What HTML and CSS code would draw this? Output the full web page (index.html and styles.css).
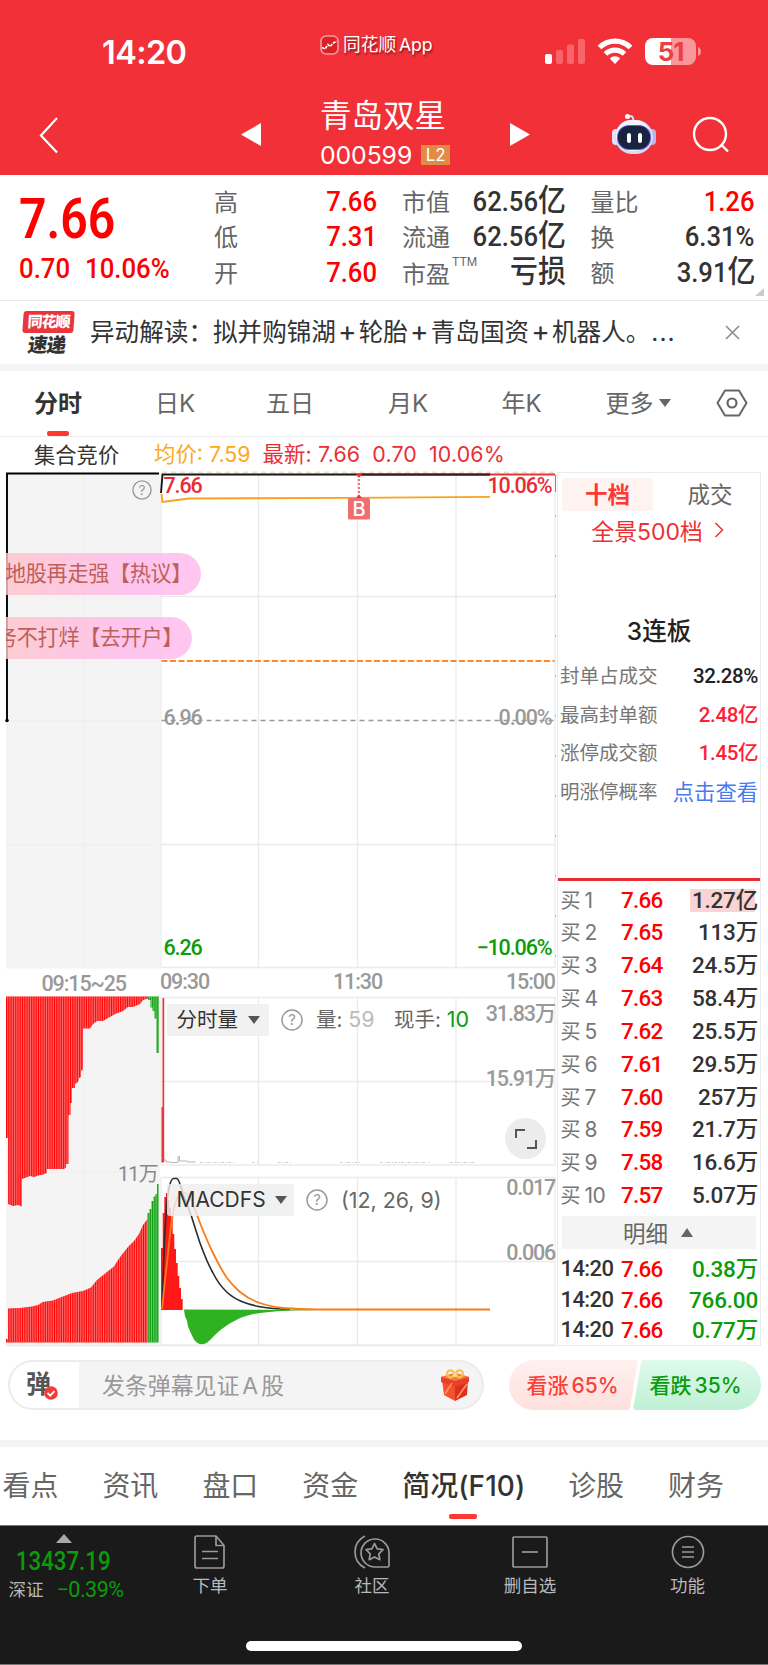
FILE: index.html
```html
<!DOCTYPE html>
<html lang="zh-CN">
<head>
<meta charset="utf-8">
<title>青岛双星 000599</title>
<link rel="stylesheet" href="styles.css">
</head>
<body>
<header class="top">
  <div class="status">
    <span class="clock">14:20</span>
    <span class="brand">
      <svg width="19" height="20" viewBox="0 0 19 20"><rect x="1" y="1" width="17" height="18" rx="5" fill="#dc2229" stroke="#f79a9d" stroke-width="1.6"/><path d="M2 12.500l3 1.500 3-4.500 2 2 4-4 3-1" fill="none" stroke="#fff" stroke-width="1.600" stroke-dasharray="3 1"/></svg>
      <span>同花顺<i>App</i></span>
    </span>
    <svg class="radio" width="158" height="30" viewBox="0 0 158 30">
      <rect x="2" y="17" width="7" height="10" rx="2" fill="#fff"/>
      <g fill="#f8646a"><rect x="13" y="13" width="7" height="14" rx="2"/><rect x="24" y="7.500" width="7" height="19.500" rx="2"/><rect x="35" y="2" width="7" height="25" rx="2"/></g>
      <g fill="none" stroke="#fff" stroke-width="5.200"><path d="M56.500 10.500a22 22 0 0 1 31 0"/><path d="M62.500 17a13.500 13.500 0 0 1 19 0"/></g>
      <path d="M66.800 21.500a7.300 7.300 0 0 1 10.400 0l-5.200 5.500z" fill="#fff"/>
      <path d="M110 1h19v27h-19a8 8 0 0 1-8-8V9a8 8 0 0 1 8-8z" fill="#fff"/>
      <path d="M128 1h17a8 8 0 0 1 8 8v11a8 8 0 0 1-8 8h-17z" fill="#f9979b"/>
      <path d="M155 10q3 1.500 3 4.500t-3 4.500z" fill="#f9979b"/>
      <text x="127.500" y="23.500" text-anchor="middle" class="batt">51</text>
    </svg>
  </div>
  <div class="nav">
    <svg class="back" width="20" height="36" viewBox="0 0 20 36"><path d="M18 1L2 18.500 18 35.500" fill="none" stroke="#fff" stroke-width="2.200"/></svg>
    <svg class="prev" width="20" height="23" viewBox="0 0 20 23"><path d="M20 0v23L0 11.500z" fill="#fff"/></svg>
    <div class="stock">
      <div class="name">青岛双星</div>
      <div class="code"><span>000599</span><b>L2</b></div>
    </div>
    <svg class="next" width="20" height="23" viewBox="0 0 20 23"><path d="M0 0v23l20-11.500z" fill="#fff"/></svg>
    <svg class="bot" width="44" height="42" viewBox="0 0 44 42">
      <path d="M15.500 3.500c4-1.500 6 0 6 5" fill="none" stroke="#dcdcf5" stroke-width="2"/><circle cx="15.500" cy="3.500" r="2.500" fill="#fff"/>
      <rect x="0" y="16" width="8" height="16" rx="4" fill="#e4e1f8"/><rect x="36" y="16" width="8" height="16" rx="4" fill="#b9b5ea"/>
      <rect x="3" y="7" width="38" height="34" rx="17" fill="#d5dcf6"/><rect x="4" y="7" width="34" height="31" rx="15" fill="#f2f4ff"/>
      <rect x="5" y="12" width="34" height="25" rx="12" fill="#675bd6"/><rect x="6" y="13" width="32" height="23" rx="11" fill="#18233f"/>
      <rect x="15" y="20" width="4" height="10" rx="2" fill="#fff"/><rect x="26" y="20" width="4" height="10" rx="2" fill="#fff"/>
    </svg>
    <svg class="find" width="38" height="38" viewBox="0 0 38 38"><g fill="none" stroke="#fff" stroke-width="2.400"><circle cx="18" cy="18" r="16"/><path d="M29 28.500l7 7"/></g></svg>
  </div>
</header>

<section class="quote">
  <div class="price">
    <div class="last"><span>7.66</span></div>
    <div class="chg"><span>0.70</span><span>10.06%</span></div>
  </div>
  <dl class="facts">
    <dt>高</dt><dd class="red">7.66</dd><dt>市值</dt><dd>62.56<em>亿</em></dd><dt>量比</dt><dd class="red">1.26</dd>
    <dt>低</dt><dd class="red">7.31</dd><dt>流通</dt><dd>62.56<em>亿</em></dd><dt>换</dt><dd>6.31%</dd>
    <dt>开</dt><dd class="red">7.60</dd><dt>市盈<sup>TTM</sup></dt><dd><em>亏损</em></dd><dt>额</dt><dd>3.91<em>亿</em></dd>
  </dl>
  <i class="corner"></i>
</section>

<section class="news">
  <div class="tag"><b>同花顺</b><strong>速递</strong></div>
  <p>异动解读：拟并购锦湖<u>+</u>轮胎<u>+</u>青岛国资<u>+</u>机器人。<s>...</s></p>
  <svg width="15" height="15" viewBox="0 0 15 15"><path d="M1 1l13 13M14 1L1 14" stroke="#909090" stroke-width="1.700"/></svg>
</section>

<nav class="periods">
  <span class="on">分时</span><span>日K</span><span>五日</span><span>月K</span><span>年K</span><span class="more">更多<i></i></span>
  <svg width="32" height="28" viewBox="0 0 32 28"><path d="M9 1.500h14L30.500 14 23 26.500H9L1.500 14z" fill="none" stroke="#666" stroke-width="2" stroke-linejoin="round"/><circle cx="16" cy="14" r="4.500" fill="none" stroke="#666" stroke-width="2.200"/></svg>
</nav>

<div class="legend"><span class="auction">集合竞价</span><span class="avg">均价: 7.59</span><span>最新: 7.66</span><span>0.70</span><span>10.06%</span></div>

<main class="board">
  <div class="charts">
    <svg class="plot" width="557" height="876" viewBox="0 471 557 876">
      <defs>
        <pattern id="slit" width="1.780" height="10" x="6" patternUnits="userSpaceOnUse"><rect x="1.300" width=".480" height="10" fill="#fff" opacity=".8"/></pattern>
      </defs>
      <path d="M6 473h154v495.500H6zM6 996.500h154V1345H6z" fill="#f4f4f4"/>
      <g stroke="#e8e8e8" stroke-dasharray="2 2"><path d="M84 474v494M6 597h153M6 845h153M84 997v348M6 1172h153"/></g>
      <path d="M6 721h153" stroke="#ececec"/>
      <g fill="none" stroke="#ebebeb" stroke-width="1.300">
        <path d="M161 473v494.500M258.500 473v494.500M357.500 473v494.500M456 473v494.500M555 473v494.500M161 596.500h394M161 844.500h394M161 967.500h394"/>
        <path d="M161 997.500h394v167.500H161zM258.500 997v168M357.500 997v168M456 997v168M161 1081.500h394"/>
        <path d="M161 1177.500h394V1345H161zM258.500 1177v168M357.500 1177v168M456 1177v168M161 1261.500h394M6 1345.500h549"/>
      </g>
      <path d="M162 472.500h393" stroke="#f1dfca" stroke-width="2" stroke-dasharray="5 4"/>
      <path d="M359 474.500h196" stroke="#e3353e" stroke-width="2"/>
      <path d="M555.500 475v493" stroke="#f3a5a8" stroke-dasharray="2 38"/>
      <path d="M555.500 475v17" stroke="#e86065" stroke-width="1"/>
      <path d="M161 493l1.500-18.500H490" fill="none" stroke="#151515" stroke-width="1.900"/>
      <path d="M360 475h130" stroke="#9d1820" stroke-width="1" opacity=".6"/>
      <path d="M7 720V473.500h152" fill="none" stroke="#000" stroke-width="1.900"/><circle cx="7" cy="720.500" r="1.800"/>
      <path d="M161.500 494l1 8 15-2 11-1.500 160-.6 141.500-1" fill="none" stroke="#fba21d" stroke-width="1.900"/>
      <path d="M161.500 661h393" stroke="#ff872b" stroke-width="2" stroke-dasharray="6 2.500"/>
      <path d="M161.500 720.500h393" stroke="#999" stroke-width="1.400" stroke-dasharray="5 4"/>
      <path d="M359 475v23" stroke="#eb343b" stroke-width="1.400" stroke-dasharray="2 2"/>
      <path d="M355.500 473.500h7L359 478zM355.500 498.500h7L359 494.500z" fill="#eb343b"/>
      <rect x="348" y="498" width="22" height="21.500" rx="1.500" fill="#f16e70"/>
      <text x="359" y="515.500" class="flag" text-anchor="middle">B</text>

      <g class="scale">
        <text x="163.500" y="493" class="up">7.66</text>
        <text x="551.500" y="493" class="up end">10.06%</text>
        <text x="163.500" y="724.500">6.96</text>
        <text x="551.500" y="724.500" class="end">0.00%</text>
        <text x="163.500" y="955" class="down">6.26</text>
        <text x="551.500" y="955" class="down end">−10.06%</text>
        <text x="41.500" y="990.500">09:15~25</text>
        <text x="160" y="989">09:30</text>
        <text x="357.500" y="989" class="mid">11:30</text>
        <text x="555" y="989" class="end">15:00</text>
      </g>

      <path d="M6 996.500H148V998.500L143 1000 140 1004 133 1007 128 1007 123 1011 115 1014 108 1018 103 1021 97 1021 93 1024 90 1028.500H83V1069L81 1071V1077L79 1078 78 1082 75 1084V1088H72V1103H70.500V1115H68.500V1164H66V1167.500L64 1169H47V1173L43 1174.500 38 1175.500 34 1177 30 1176 22 1179V1206.500L18 1205 13 1206 8 1204V1138H6z" fill="#f00"/>
      <path d="M6 996.500H148V998.500L143 1000 140 1004 133 1007 128 1007 123 1011 115 1014 108 1018 103 1021 97 1021 93 1024 90 1028.500H83V1069L81 1071V1077L79 1078 78 1082 75 1084V1088H72V1103H70.500V1115H68.500V1164H66V1167.500L64 1169H47V1173L43 1174.500 38 1175.500 34 1177 30 1176 22 1179V1206.500L18 1205 13 1206 8 1204V1138H6z" fill="url(#slit)"/>
      <path d="M148 996.500h11V1053h-2.500v-34.500h-2V1011h-2v-3.500h-2V1000H148z" fill="#0a9c0a"/>
      <path d="M148 996.500h11V1053h-2.500v-34.500h-2V1011h-2v-3.500h-2V1000H148z" fill="url(#slit)"/>
      <path d="M6 1342.500V1339H8V1308.500L20 1308 32 1306.500 38 1305 43 1302 53 1300.500 63 1296.500 72 1293 83 1291 91 1287.500 97 1280 107 1272 114 1266.500 118 1260 122 1254.500 128 1247 134 1241 139 1234 143 1225 147.500 1219V1342.500z" fill="#f00"/>
      <path d="M6 1342.500V1339H8V1308.500L20 1308 32 1306.500 38 1305 43 1302 53 1300.500 63 1296.500 72 1293 83 1291 91 1287.500 97 1280 107 1272 114 1266.500 118 1260 122 1254.500 128 1247 134 1241 139 1234 143 1225 147.500 1219V1342.500z" fill="url(#slit)"/>
      <path d="M147.500 1342.500V1213h2v-4h2v-8h2v-4.500h2V1194h1.500v-10h1.700v158.500z" fill="#0a9c0a"/>
      <path d="M147.500 1342.500V1213h2v-4h2v-8h2v-4.500h2V1194h1.500v-10h1.700v158.500z" fill="url(#slit)"/>
      <text x="158" y="1180.500" class="wan">11万</text>

      <path d="M161.500 1162.500V1107h1V998h1.700v164.500z" fill="#e9363b"/>
      <path d="M164 1160h2v2h5v.5h7v-6h1.500v4.500h8v1h8" fill="none" stroke="#b5b5b5"/>
      <path d="M200 1162.500h34M252 1162.500h6M278 1162.500h14M340 1162.500h20M380 1162.500h50M450 1162.500h24" fill="none" stroke="#d0d0d0" stroke-width="1" stroke-dasharray="3 2 1 1"/>
      <g class="scale volumes">
        <text x="555" y="1020.500" class="end">31.83万</text>
        <text x="555" y="1085.500" class="end">15.91万</text>
        <text x="555" y="1195" class="end">0.017</text>
        <text x="555" y="1260" class="end">0.006</text>
      </g>

      <path d="M161 1310V1248h1.700v-35h1.600v-16h1.700v-4h1.700v7h1.600v8h1.700v12h1.700v14h1.600v15h1.700v14h1.700v13h1.600v12h1.700v11h1.700v11z" fill="#ff1818"/>
      <path d="M184 1309.500l1 7 2 4 1 6 3 7 3 6c4 6 10 6 15 1.500L217 1333c13-11 26-18 43-20 20-2.500 37-2.500 57-3z" fill="#2fb222"/>
      <path d="M162 1308C163 1285 163.600 1262 164.500 1240 165.400 1222 166.500 1200 169 1188 170.500 1181 172 1178.500 173.500 1178.500H177C179 1179 181 1187 183 1194 186 1202 189 1209 191.700 1217 194.500 1226 197 1234 200 1243 204 1254 208.500 1265 213 1273 217 1281 222 1287.500 226.700 1292 231.500 1296.500 237 1299.700 243 1302 248 1304 254 1305.700 260 1306.700 269 1308.200 279 1309 290 1309.300" fill="none" stroke="#2b2b2b" stroke-width="1.600"/>
      <path d="M162 1309C164 1290 165 1278 167 1263 169 1244 170.500 1226 173 1213 174.500 1205 176 1200 178 1197 179.500 1194 181 1192.700 183 1192.700 186 1192.700 188 1194.500 190 1198 194 1206 197 1215 200 1223 204 1233 208.500 1244 213 1253 217.500 1262 222 1271 227 1278 231 1283.500 235.500 1288 240 1292 245 1296 251 1299.700 257 1302 265 1305 274 1307 283 1308 294 1309 305 1309.500 317 1309.500H490" fill="none" stroke="#fa7c18" stroke-width="1.800"/>
    </svg>

    <svg class="tip tip-auction" width="20" height="20" viewBox="0 0 22 22"><circle cx="11" cy="11" r="10"/><text x="11" y="16" text-anchor="middle">?</text></svg>
    <div class="danmu first"><span>地股再走强【热议】</span></div>
    <div class="danmu second"><span>务不打烊【去开户】</span></div>

    <div class="tools volume">
      <button>分时量<i></i></button>
      <svg class="tip" width="22" height="22" viewBox="0 0 22 22"><circle cx="11" cy="11" r="10"/><text x="11" y="16" text-anchor="middle">?</text></svg>
      <span class="qty">量: <b>59</b></span><span>现手: <em>10</em></span>
    </div>
    <div class="expand"><svg width="24" height="22" viewBox="0 0 24 22"><path d="M2 10V2h9M22 12v8h-9" fill="none" stroke="#555" stroke-width="2"/></svg></div>
    <div class="tools macd">
      <button>MACDFS<i></i></button>
      <svg class="tip" width="22" height="22" viewBox="0 0 22 22"><circle cx="11" cy="11" r="10"/><text x="11" y="16" text-anchor="middle">?</text></svg>
      <span class="args">(12, 26, 9)</span>
    </div>
  </div>

  <aside class="book">
    <div class="switch"><b>十档</b><span>成交</span></div>
    <div class="full">全景500档<svg width="10" height="16" viewBox="0 0 10 16"><path d="M1.500 1l7 7-7 7" fill="none" stroke="#ee3036" stroke-width="1.500"/></svg></div>
    <h2>3连板</h2>
    <ul class="stats">
      <li><span>封单占成交</span><b>32.28%</b></li>
      <li><span>最高封单额</span><b class="red">2.48亿</b></li>
      <li><span>涨停成交额</span><b class="red">1.45亿</b></li>
      <li><span>明涨停概率</span><a>点击查看</a></li>
    </ul>
    <ul class="bids">
      <li><span>买<i>1</i></span><b>7.66</b><em class="hot">1.27亿</em></li>
      <li><span>买<i>2</i></span><b>7.65</b><em>113万</em></li>
      <li><span>买<i>3</i></span><b>7.64</b><em>24.5万</em></li>
      <li><span>买<i>4</i></span><b>7.63</b><em>58.4万</em></li>
      <li><span>买<i>5</i></span><b>7.62</b><em>25.5万</em></li>
      <li><span>买<i>6</i></span><b>7.61</b><em>29.5万</em></li>
      <li><span>买<i>7</i></span><b>7.60</b><em>257万</em></li>
      <li><span>买<i>8</i></span><b>7.59</b><em>21.7万</em></li>
      <li><span>买<i>9</i></span><b>7.58</b><em>16.6万</em></li>
      <li><span>买<i>10</i></span><b>7.57</b><em>5.07万</em></li>
    </ul>
    <div class="detail">明细<i></i></div>
    <ul class="ticks">
      <li><span>14:20</span><b>7.66</b><em>0.38万</em></li>
      <li><span>14:20</span><b>7.66</b><em>766.00</em></li>
      <li><span>14:20</span><b>7.66</b><em>0.77万</em></li>
    </ul>
  </aside>
</main>

<section class="talk">
  <div class="input">
    <div class="dan">弹<svg width="14" height="14" viewBox="0 0 14 14"><circle cx="7" cy="7" r="6.800" fill="#f63a35"/><path d="M3.500 6.800l2.700 2.900 4.300-4.500" fill="none" stroke="#fff" stroke-width="1.800"/></svg></div>
    <span>发条弹幕见证<i>A</i>股</span>
    <svg class="gift" width="30" height="32" viewBox="0 0 30 32">
      <path d="M2 11l13 5v16L4 26z" fill="#f4522f"/><path d="M28 11l-13 5v16l12-6z" fill="#dc301d"/><path d="M1 8l14-4 14 4v5l-14 5-14-5z" fill="#e8402a"/><path d="M1 8l14-4 14 4-14 4z" fill="#f77b3d"/>
      <path d="M5 25l7-11M17 29l10-14" stroke="#ff9a55" stroke-width="1.500"/>
      <g fill="none" stroke="#f6c24e" stroke-width="2.200"><circle cx="10.500" cy="4.800" r="3.500"/><circle cx="19.500" cy="4.800" r="3.500"/></g><circle cx="15" cy="6" r="2" fill="#ffe289"/>
    </svg>
  </div>
  <div class="vote">
    <svg width="252" height="50" viewBox="0 0 252 50">
      <defs><linearGradient id="r" x2="0" y2="1"><stop stop-color="#fff0ef"/><stop offset="1" stop-color="#fee0dd"/></linearGradient><linearGradient id="g" x2="0" y2="1"><stop stop-color="#dffaec"/><stop offset="1" stop-color="#c0f0d5"/></linearGradient></defs>
      <path d="M25 0H126q3 0 2.500 3L121 47q-.5 3-3 3H25a25 25 0 0 1 0-50z" fill="url(#r)"/>
      <path d="M135 0H227a25 25 0 0 1 0 50H127q-3 0-2.500-3L132 3q.5-3 3-3z" fill="url(#g)"/>
    </svg>
    <span class="bull">看涨 65%</span><span class="bear">看跌 35%</span>
  </div>
</section>

<nav class="sections">
  <span>看点</span><span>资讯</span><span>盘口</span><span>资金</span><span class="on">简况(F10)</span><span>诊股</span><span>财务</span>
</nav>

<footer class="dock">
  <div class="index"><i></i><b>13437.19</b><p><span>深证</span><em>−0.39%</em></p></div>
  <div class="items">
    <div class="item order"><svg width="32" height="34" viewBox="0 0 32 34"><path d="M3 1h19l8 9.500V31q0 2-2 2H3q-2 0-2-2V3q0-2 2-2zM22 1v9.500h8M8 16.500h16M8 23.500h16"/></svg>下单</div>
    <div class="item club"><svg width="36" height="34" viewBox="0 0 36 34"><path d="M11 1Q1 6 1 17t10 16M35 31V17A14 14 0 1 0 21 32h13zM20.500 8.500l2.700 5.300 5.800.9-4.200 4.100 1 5.900-5.300-2.800-5.300 2.800 1-5.900-4.200-4.100 5.900-.9z"/></svg>社区</div>
    <div class="item drop"><svg width="36" height="34" viewBox="0 0 36 34"><rect x="1" y="2" width="34" height="30" rx="1"/><path d="M10 17h16"/></svg>删自选</div>
    <div class="item func"><svg width="34" height="34" viewBox="0 0 34 34"><circle cx="17" cy="17" r="15.500"/><path d="M11 12h12M11 17h12M11 22h12"/></svg>功能</div>
  </div>
  <div class="home"></div>
</footer>
</body>
</html>
```

FILE: styles.css
```css
* { box-sizing: border-box; margin: 0; padding: 0; }
body { width: 768px; height: 1665px; overflow: hidden; background: #fff; color: #333; font-family: Inter, "Noto Sans CJK SC", sans-serif; }
ul { list-style: none; }
i, em { font-style: normal; }
svg { display: block; flex: none; }
.red { color: #f00 !important; }

/* header */
.top { height: 174.500px; background: #f13137; color: #fff; }
.status { height: 78px; padding: 37px 0 0 102px; display: flex; align-items: flex-start; }
.clock { width: 218px; font-size: 32.500px; line-height: 32px; font-weight: 600; letter-spacing: -.6px; }
.brand { width: 223px; display: flex; gap: 4px; margin-top: -3px; align-items: center; font-size: 17.700px; line-height: 21px; text-shadow: 1px 2px 2px rgba(80, 0, 0, .6); }
.brand i { margin-left: 3px; letter-spacing: -.2px; }
.batt { font: 700 26px Inter; fill: #ef3d45; letter-spacing: -1.200px; }
.nav { height: 95px; display: flex; align-items: flex-start; padding-left: 39px; }
.back { margin-top: 38.500px; margin-right: 182px; }
.prev, .next { margin-top: 44.500px; }
.prev { margin-right: 59px; }
.stock { width: 190px; padding-top: 20px; }
.name { font-size: 31.500px; line-height: 36px; }
.code { display: flex; align-items: center; gap: 9px; margin-top: 10px; height: 22px; font-size: 24.800px; letter-spacing: -.1px; }
.code b { width: 29px; height: 20px; background: #e18c45; font-size: 17px; line-height: 20px; font-weight: 400; text-align: center; }
.bot { margin: 34.500px 0 0 82px; }
.find { margin: 38px 0 0 36px; }

/* quote */
.quote { position: relative; height: 126.500px; display: flex; padding-left: 20px; border-bottom: 1.500px solid #e9e9e9; }
.price { width: 194px; color: #f00; font-family: Roboto, sans-serif; font-weight: 500; }
.last { height: 66px; padding-top: 16px; font-size: 56px; line-height: 56px; font-weight: 600; }
.last span { display: inline-block; margin-left: -1px; transform: scaleX(.86); transform-origin: 0 50%; }
.chg { display: flex; margin-top: 12.500px; font-size: 28px; line-height: 32px; }
.chg span { width: 66px; margin-left: -1px; transform: scaleX(.92); transform-origin: 0 50%; white-space: nowrap; }
.chg span + span { margin-left: 0; }
.facts { display: grid; grid-template-columns: 40px 123px 62px 126px 62px 127.500px; grid-template-rows: repeat(3, 35.500px); padding-top: 9px; line-height: 35px; }
.facts dt { font-size: 24px; color: #666; white-space: nowrap; position: relative; top: 1px; }
.facts dt:nth-of-type(3n) { padding-left: .5px; }
.facts dt:nth-of-type(8) { top: 2.500px; }
.facts dd { font-family: Roboto, "Noto Sans CJK SC"; font-size: 28.500px; font-weight: 500; text-align: right; transform: scaleX(.9); transform-origin: 100% 50%; }
.facts dd em { font-weight: 500; font-size: 31px; margin-right: -1px; line-height: 30px; }
.facts dt:nth-of-type(3n + 2), .facts dt:nth-of-type(3n) { margin-left: 25px; margin-right: -25px; }
.facts sup { position: absolute; left: 50px; top: -10.500px; font-size: 11.500px; line-height: 30px; }
.corner { position: absolute; right: 4px; bottom: 4px; border: solid transparent; border-width: 0 0 8px 9px; border-bottom-color: #ccc; }

/* news */
.news { height: 70px; border-bottom: 7px solid #f4f4f4; display: flex; align-items: center; padding-left: 22px; }
.tag { width: 68px; height: 44px; }
.tag b { display: block; width: 51px; height: 22px; margin-left: 1px; border-radius: 3px; background: #ea353b; color: #fff; font-size: 15px; line-height: 21px; font-weight: 900; text-align: center; letter-spacing: -1px; transform: skewX(-4deg); }
.tag strong { display: block; margin-left: 6px; font-size: 19.500px; line-height: 24px; font-weight: 900; letter-spacing: -.7px; transform: skewX(-8deg); }
.news p { width: 634.500px; font-size: 24.600px; line-height: 34px; white-space: nowrap; margin-top: -1.500px; }
.news u { text-decoration: none; display: inline-block; width: 22.800px; font-size: 28px; line-height: 20px; text-align: center; }
.news s { text-decoration: none; letter-spacing: 1px; margin-left: 1px; }

/* tabs */
.periods { height: 65.500px; position: relative; display: flex; align-items: center; padding-left: 34px; border-bottom: 1.500px solid #ececec; font-size: 24px; color: #666; }
.periods span { width: 122px; height: 40px; line-height: 41px; }
.periods span:nth-child(1) { width: 121px; }
.periods span:nth-child(2) { width: 111px; }
.periods span:nth-child(4) { width: 113.500px; }
.periods span:nth-child(5) { width: 104px; }
.periods .on { color: #333; font-weight: 600; }
.periods .on::after { content: ""; position: absolute; left: 47px; bottom: 0; width: 22px; height: 5px; border-radius: 2px; background: #ff3931; }
.periods .more { width: 110.500px; display: flex; align-items: center; gap: 5px; }
.periods .more i { border: 6px solid transparent; border-top: 8px solid #666; border-bottom: 0; }
.legend { height: 34.500px; display: flex; padding: 0 0 0 34px; font-size: 21.400px; line-height: 35px; color: #ea2e34; white-space: pre; }
.legend span { margin-right: 12px; }
.legend .auction { width: 108px; color: #333; font-size: 21.300px; line-height: 37px; }
.legend .avg { color: #fbaa19; }
.legend span:nth-child(n + 3) { letter-spacing: .15px; }

/* charts */
.board { height: 876px; display: flex; }
.charts { position: relative; width: 557px; }
.plot { overflow: visible; }
.scale { font: 500 21.500px Roboto, "Noto Sans CJK SC"; fill: #999; letter-spacing: -1.100px; }
.volumes { letter-spacing: -1.200px; }
.scale .up { fill: #e92c34; }
.scale .down { fill: #0a9c0a; }
.end, .wan { text-anchor: end; }
.mid { text-anchor: middle; }
.wan { font: 20px Roboto, "Noto Sans CJK SC"; fill: #888; letter-spacing: -.8px; }
.flag { font: 500 20px Inter; fill: #fff; }
.tip circle { fill: none; stroke: #999; stroke-width: 1.500; }
.tip text { font: 15px Inter; fill: #999; }
.tip-auction { position: absolute; left: 132px; top: 9px; }
.danmu { position: absolute; left: 6px; height: 42px; overflow: hidden; border-radius: 0 21px 21px 0; background: linear-gradient(90deg, rgba(255, 195, 202, .82), rgba(255, 190, 237, .88) 65%); color: #be5f5a; font-size: 21.100px; line-height: 42px; letter-spacing: -.3px; }
.danmu span { display: block; margin-left: -1px; white-space: nowrap; }
.first { top: 82px; width: 195px; }
.second { top: 146px; width: 186px; }
.second span { margin-left: -10px; }
.tools { position: absolute; left: 167px; display: flex; align-items: center; height: 32px; font-size: 20.500px; line-height: 30px; color: #666; white-space: nowrap; }
.tools button { border: 0; height: 32px; border-radius: 3px; background: rgba(238, 238, 238, .82); color: #333; padding: 0 0 0 9.500px; font: inherit; display: flex; align-items: center; }
.tools button i { border: 6px solid transparent; border-top: 8px solid #555; border-bottom: 0; margin: 0 0 0 9.500px; }
.volume { top: 532.500px; }
.volume button { width: 102px; }
.macd { top: 713px; }
.macd button { width: 127px; font-size: 21px; }
.tools .tip { margin: 0 13px 0 12px; }
.tools b { font-weight: 400; color: #bbb; font-size: 21.500px; }
.qty { width: 78px; }
.args { font-size: 21.400px; }
.tools em { color: #0a9c0a; font-size: 21.500px; }
.expand { position: absolute; left: 505px; top: 647px; width: 41px; height: 41px; border-radius: 50%; background: #ececec; display: grid; place-items: center; }

/* order book */
.book { width: 204px; margin-top: 1px; height: 874px; border: 1.500px solid #ebebeb; padding: 5px 3px 0 4px; }
.switch { display: flex; height: 33px; font-size: 22.500px; line-height: 33px; text-align: center; color: #666; }
.switch b { width: 92px; background: #fff3f2; color: #fb3a33; border-radius: 3px; font-weight: 600; }
.switch span { width: 105px; padding-left: 10px; }
.full { display: flex; align-items: center; justify-content: center; gap: 11px; height: 37px; font-size: 23px; color: #ee3036; letter-spacing: -.1px; padding-right: 4px; }
.book h2 { margin-top: 64px; height: 38px; font-size: 24.500px; line-height: 38px; font-weight: 500; text-align: center; padding-right: 1px; color: #222; }
.stats { padding-top: 7px; height: 231px; border-bottom: 3.500px solid #e82d32; margin: 0 -3px 0 -4px; padding-left: 2px; padding-right: 2px; }
.stats li { height: 38.700px; line-height: 38.700px; display: flex; justify-content: space-between; font-size: 19.500px; color: #777; white-space: nowrap; }
.stats b { color: #222; font-family: Roboto, "Noto Sans CJK SC"; font-size: 20.500px; font-weight: 500; letter-spacing: -.4px; }
.stats .red { color: #ff1e35 !important; }
.stats a { color: #4a7af3; font-size: 21.300px; }
.bids { padding-top: 2.500px; }
.bids li, .ticks li { display: grid; grid-template-columns: 60.500px 45px 92px; height: 32.850px; line-height: 33px; font-size: 22px; white-space: nowrap; margin-left: -1.500px; }
.book li > em { text-align: right; font-family: Roboto, "Noto Sans CJK SC"; font-weight: 500; font-size: 22.500px; letter-spacing: -.2px; }
.bids li span { color: #777; font-size: 20px; }
.bids span i { margin-left: 4px; font-size: 21px; letter-spacing: -.5px; }
.bids b, .ticks b { color: #f00; font-family: Roboto; font-weight: 500; letter-spacing: -.8px; font-size: 22.500px; }
.bids .hot { background: linear-gradient(#fad3d4, #fad3d4) 24px 5px / 65px 23px no-repeat; }
.detail { height: 33px; margin-top: 4px; margin-right: 1px; background: #f4f4f4; color: #666; font-size: 22.500px; display: flex; align-items: center; justify-content: center; gap: 13px; padding-right: 2px; }
.detail i { border: 6px solid transparent; border-bottom: 9px solid #666; border-top: 0; }
.ticks { padding-top: 5.500px; }
.ticks li { height: 30.400px; line-height: 30px; }
.ticks li span { font-family: Roboto; font-weight: 500; letter-spacing: -.6px; }
.ticks em { color: #0a9c0a; }

/* comment bar */
.talk { height: 100px; padding: 13px 7.500px 0 8px; border-bottom: 7px solid #f4f4f4; display: flex; justify-content: space-between; }
.input { width: 476px; height: 50px; border: 2px solid #ececec; border-radius: 25px; overflow: hidden; background: #f4f4f4; display: flex; align-items: center; font-size: 22.900px; color: #999; }
.dan { position: relative; width: 69px; height: 46px; padding-left: 16px; background: #fff; color: #555; font-size: 25px; line-height: 44px; font-weight: 700; }
.dan svg { position: absolute; left: 34px; top: 24px; }
.input > span { width: 361px; padding: 0 0 2px 23px; }
.input i { margin: 0 3px; }
.vote { position: relative; width: 252px; height: 50px; }
.vote span { position: absolute; top: 0; font-size: 21px; line-height: 51px; font-weight: 500; word-spacing: -2.500px; white-space: nowrap; }
.bull { left: 18px; color: #fa4038; }
.bear { left: 141px; color: #0a9c0a; }

/* section tabs */
.sections { height: 78px; display: flex; padding-left: 2.500px; font-size: 27.900px; line-height: 79px; color: #666; white-space: nowrap; }
.sections span { width: 100px; }
.sections .on { position: relative; width: 166px; color: #333; font-weight: 500; letter-spacing: .1px; }
.sections .on::after { content: ""; position: absolute; left: 47px; bottom: 6px; width: 28px; height: 5px; border-radius: 2px; background: #ff3931; }

/* bottom dock */
.dock { height: 140px; border-top: 1px solid #777; border-bottom: 1px solid #777; background: #1a1a1a; display: grid; grid-template-columns: 127px 1fr; color: #b9b9b9; grid-template-rows: 115px 9px; }
.index { display: flex; flex-direction: column; align-items: center; padding-top: 8px; font-family: Roboto, "Noto Sans CJK SC"; }
.index > i { border: 8px solid transparent; border-bottom: 9px solid #aaa; border-top: 0; }
.index b { margin-top: 4px; height: 28px; font-size: 25px; line-height: 29px; font-weight: 500; color: #0a9c0a; transform: scaleX(.89); }
.index p { display: flex; gap: 13px; font-size: 17.500px; line-height: 22px; margin: 4px 0 0 4px; white-space: nowrap; }
.index em { color: #0a9c0a; font-size: 21.500px; width: 66px; letter-spacing: -.5px; line-height: 21px; }
.items { display: grid; grid-template-columns: 166px 158px 158px 157px; padding-top: 9px; }
.item { display: flex; flex-direction: column; align-items: center; gap: 4px; font-size: 17.500px; line-height: 26px; }
.item svg { fill: none; stroke: #999; stroke-width: 1.700; stroke-linejoin: round; }
.home { grid-column: 1 / 3; justify-self: center; width: 276px; height: 10px; border-radius: 5px; background: #fff; }
```
